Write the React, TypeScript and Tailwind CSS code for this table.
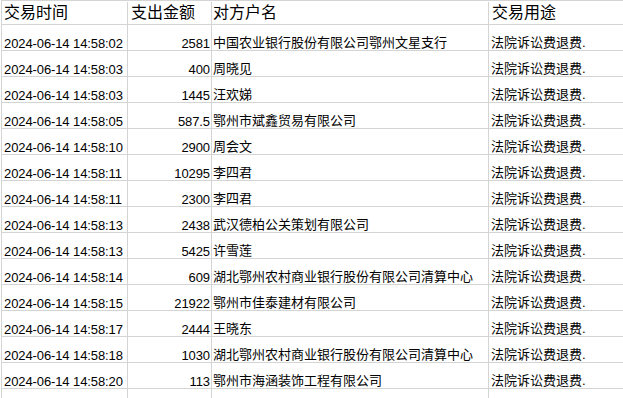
import type { FunctionComponent } from "react";

type Row = { time: string; amount: string; name: string };

const rows: Row[] = [
  { time: "2024-06-14 14:58:02", amount: "2581", name: "中国农业银行股份有限公司鄂州文星支行" },
  { time: "2024-06-14 14:58:03", amount: "400", name: "周晓见" },
  { time: "2024-06-14 14:58:03", amount: "1445", name: "汪欢娣" },
  { time: "2024-06-14 14:58:05", amount: "587.5", name: "鄂州市斌鑫贸易有限公司" },
  { time: "2024-06-14 14:58:10", amount: "2900", name: "周会文" },
  { time: "2024-06-14 14:58:11", amount: "10295", name: "李四君" },
  { time: "2024-06-14 14:58:11", amount: "2300", name: "李四君" },
  { time: "2024-06-14 14:58:13", amount: "2438", name: "武汉德柏公关策划有限公司" },
  { time: "2024-06-14 14:58:13", amount: "5425", name: "许雪莲" },
  { time: "2024-06-14 14:58:14", amount: "609", name: "湖北鄂州农村商业银行股份有限公司清算中心" },
  { time: "2024-06-14 14:58:15", amount: "21922", name: "鄂州市佳泰建材有限公司" },
  { time: "2024-06-14 14:58:17", amount: "2444", name: "王晓东" },
  { time: "2024-06-14 14:58:18", amount: "1030", name: "湖北鄂州农村商业银行股份有限公司清算中心" },
  { time: "2024-06-14 14:58:20", amount: "113", name: "鄂州市海涵装饰工程有限公司" },
];

const font = "[font-family:Liberation_Sans,Noto_Sans_CJK_SC,sans-serif]";
const grid = "grid grid-cols-[126px_84px_277px_1fr]";
const cell = "border-r border-b border-[#d4d4d4] flex overflow-hidden whitespace-nowrap";

const DataRow: FunctionComponent<{ row?: Row }> = ({ row }) => {
  const r = row ?? { time: "", amount: "", name: "" };
  const numText = "text-[13px] tracking-[-0.1px] leading-[13px]";
  const cjkText = "text-[13px] leading-[13px] pb-px";
  return (
    <div className={`${grid} h-[26px]`}>
      <div className={`${cell} items-end pl-[2px] ${numText}`}>{r.time}</div>
      <div className={`${cell} items-end justify-end pr-[1px] ${numText}`}>{r.amount}</div>
      <div className={`${cell} items-end pl-[1px] ${cjkText}`}>{r.name}</div>
      <div className={`border-b border-[#d4d4d4] flex items-end pl-[2px] ${cjkText}`}>
        {row ? "法院诉讼费退费." : ""}
      </div>
    </div>
  );
};

export default function App() {
  return (
    <div className={`w-[623px] h-[398px] bg-white overflow-hidden pl-px text-black ${font}`}>
      <div className="border-l border-t border-[#d4d4d4]">
        <div className={`${grid} h-[24px] text-[16px] leading-[20px] pt-px`}>
          <div className={`${cell} items-center pl-[2px]`}>交易时间</div>
          <div className={`${cell} items-center pl-[3px]`}>支出金额</div>
          <div className={`${cell} items-center pl-[1px]`}>对方户名</div>
          <div className="border-b border-[#d4d4d4] flex items-center pl-[3px]">交易用途</div>
        </div>
        {rows.map((row, i) => (
          <DataRow key={i} row={row} />
        ))}
        <DataRow />
      </div>
    </div>
  );
}
